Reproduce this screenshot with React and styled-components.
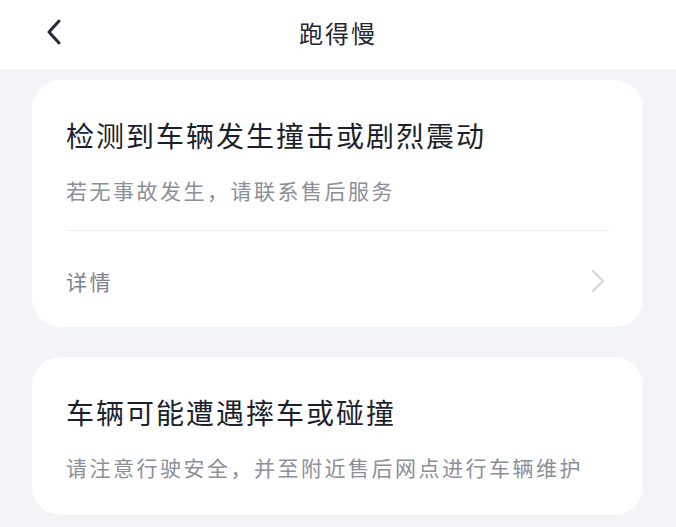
import styled, { createGlobalStyle } from "styled-components";

const GlobalStyle = createGlobalStyle`
  html, body {
    margin: 0;
    padding: 0;
    background-color: #f3f4f8;
    font-family: "Noto Sans CJK SC", "Noto Sans", sans-serif;
  }
`;

const Page = styled.div`
  width: 676px;
  min-height: 527px;
  background-color: #f3f4f8;
`;

const Header = styled.div`
  height: 69px;
  background-color: #ffffff;
  display: flex;
  align-items: center;
  justify-content: center;
  position: relative;
`;

const BackButton = styled.button`
  position: absolute;
  left: 40px;
  top: 14px;
  width: 28px;
  height: 36px;
  padding: 0;
  border: none;
  background: transparent;
  display: flex;
  align-items: center;
  justify-content: center;
  cursor: pointer;
`;

const HeaderTitle = styled.h1`
  margin: 0 0 4px;
  font-size: 24px;
  font-weight: 400;
  letter-spacing: 2px;
  color: #23262f;
`;

const List = styled.div`
  display: flex;
  flex-direction: column;
  gap: 30px;
  padding: 11px 33px 0 32px;
`;

const Card = styled.div`
  background-color: #ffffff;
  border-radius: 28px;
  padding: ${({ $bottom }) => `40px 33px ${$bottom}px 34px`};
`;

const Title = styled.h2`
  margin: 0;
  font-size: 28px;
  line-height: 30px;
  font-weight: 400;
  letter-spacing: 2px;
  color: #1c1f2c;
`;

const Subtitle = styled.p`
  margin: 25px 0 0;
  font-size: 21px;
  line-height: 30px;
  letter-spacing: 2.5px;
  color: #8c8e98;
`;

const Divider = styled.div`
  height: 1px;
  margin-top: 25px;
  background-color: #ecedf0;
`;

const DetailRow = styled.div`
  display: flex;
  align-items: center;
  justify-content: space-between;
  padding: 35px 4px 31px 0;
  cursor: pointer;
`;

const DetailText = styled.span`
  font-size: 21px;
  line-height: 30px;
  letter-spacing: 2.5px;
  color: #80828b;
`;

const Chevron = ({ dir, color, width }) => (
  <svg width="16" height="26" viewBox="0 0 16 26" fill="none">
    <path
      d={dir === "left" ? "M13 2 L3 13 L13 24" : "M3 3 L13 13 L3 23"}
      stroke={color}
      strokeWidth={width}
      strokeLinecap="round"
      strokeLinejoin="round"
    />
  </svg>
);

export default function App() {
  return (
    <>
      <GlobalStyle />
      <Page>
        <Header>
          <BackButton>
            <Chevron dir="left" color="#262a38" width={3} />
          </BackButton>
          <HeaderTitle>跑得慢</HeaderTitle>
        </Header>
        <List>
          <Card $bottom={0}>
            <Title>检测到车辆发生撞击或剧烈震动</Title>
            <Subtitle>若无事故发生，请联系售后服务</Subtitle>
            <Divider />
            <DetailRow>
              <DetailText>详情</DetailText>
              <Chevron dir="right" color="#d6d7db" width={2.4} />
            </DetailRow>
          </Card>
          <Card $bottom={33}>
            <Title>车辆可能遭遇摔车或碰撞</Title>
            <Subtitle>请注意行驶安全，并至附近售后网点进行车辆维护</Subtitle>
          </Card>
        </List>
      </Page>
    </>
  );
}
